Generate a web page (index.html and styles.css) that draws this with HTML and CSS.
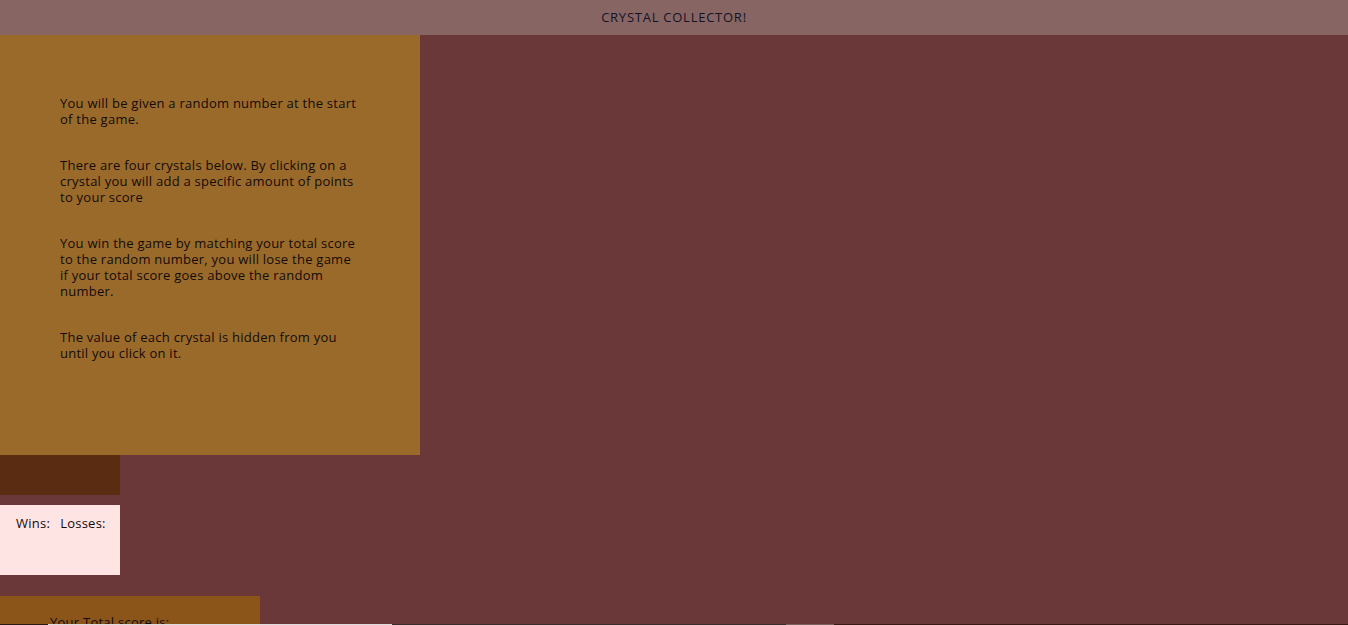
FILE: index.html
```html
<!DOCTYPE html>
<html>
<head>
<meta charset="utf-8">
<title>Crystal Collector</title>
<link rel="stylesheet" href="styles.css">
</head>
<body>
<header class="topbar">CRYSTAL COLLECTOR!</header>
<main class="game">
  <section class="instructions">
    <p>You will be given a random number at the start of the game.</p>
    <p>There are four crystals below. By clicking on a crystal you will add a specific amount of points to your score</p>
    <p>You win the game by matching your total score to the random number, you will lose the game if your total score goes above the random number.</p>
    <p>The value of each crystal is hidden from you until you click on it.</p>
  </section>
  <div class="target"></div>
  <div class="record"><span>Wins:</span><span>Losses:</span></div>
  <div class="score">Your Total score is:</div>
  <div class="crystals">
    <span class="c c1"></span><span class="c c2"></span><span class="c c3"></span><span class="c c4"></span><span class="c c5"></span>
  </div>
</main>
</body>
</html>
```
FILE: styles.css
```css
html, body {
  margin: 0;
  padding: 0;
}
body {
  background: #6b383a;
  font-family: "Open Sans", "DejaVu Sans", sans-serif;
  font-size: 13px;
  letter-spacing: 0.25px;
  color: #140a0a;
  overflow: hidden;
  height: 625px;
}
.topbar {
  height: 35px;
  line-height: 35px;
  background: #876563;
  text-align: center;
  color: #141428;
  font-size: 13px;
  letter-spacing: 0.75px;
}
.game {
  position: relative;
}
.instructions {
  height: 420px;
  box-sizing: border-box;
  width: 420px;
  padding: 60px 58px 0 60px;
  background: #9a6a2a;
}
.instructions p {
  margin: 0 0 30px 0;
  line-height: 16px;
}
.target {
  width: 120px;
  height: 40px;
  background: #5a2d12;
}
.record {
  margin-top: 10px;
  width: 120px;
  height: 70px;
  box-sizing: border-box;
  padding: 10px 0 0 16px;
  background: #ffe4e4;
  display: flex;
  gap: 10px;
  line-height: 16px;
}
.score {
  margin-top: 21px;
  width: 260px;
  height: 60px;
  box-sizing: border-box;
  padding: 18px 0 0 50px;
  background: #8b5519;
  line-height: 16px;
}
.crystals {
  position: absolute;
  left: 0;
  right: 0;
  top: 589px;
  height: 4px;
  display: flex;
}
.c { display: block; height: 4px; }
.c1 { width: 48px; background: #2a1812; }
.c2 { width: 344px; background: #dcdcdc; }
.c3 { width: 394px; background: #3a2e2c; }
.c4 { width: 48px; background: #7a625e; }
.c5 { flex: 1; background: #3a1a14; }
```
